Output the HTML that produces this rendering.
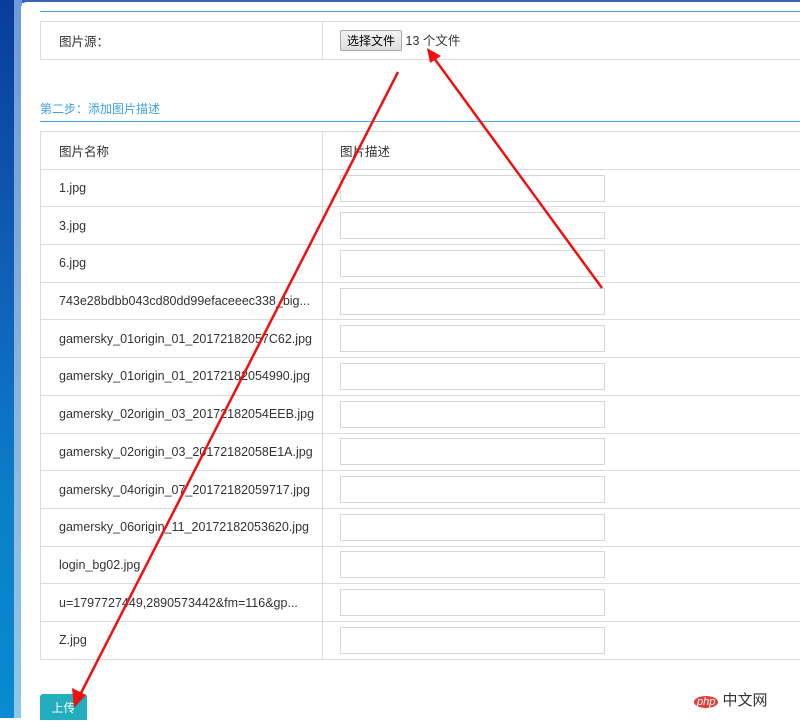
<!DOCTYPE html>
<html><head><meta charset="utf-8"><style>
body{margin:0;width:800px;height:718px;overflow:hidden;position:relative;background:#fff;font-family:"Liberation Sans","Noto Sans CJK SC",sans-serif;font-size:12.5px;color:#333}
.bg{position:absolute;left:0;top:0;width:14px;height:718px;background:linear-gradient(#0a3d9a,#1060b8 40%,#0b7fc8 70%,#0a8ad0)}
.bg2{position:absolute;left:14px;top:0;width:8px;height:718px;background:linear-gradient(#6c9bd8,#8ab6e0 60%,#8cc8e8)}
.topb{position:absolute;left:22px;top:0;width:778px;height:3px;background:#3a64b8}
.panel{position:absolute;left:21px;top:2px;width:779px;height:716px;background:#fff;border-top-left-radius:6px}
.hl{position:absolute;left:40px;right:0;height:1px;background:#4aa8e8}
table{position:absolute;left:40px;width:761px;border-collapse:collapse;table-layout:fixed}
td{border:1px solid #dcdcdc;padding:0 0 0 18px;white-space:nowrap;overflow:hidden;box-sizing:border-box;vertical-align:middle}
td.c2{padding-left:17px}
.t2 tr{height:37.7px}
.inp{width:265px;height:27px;border:1px solid #d6d6d6;box-sizing:border-box}
.btn{display:inline-block;border:1px solid #a9a9a9;background:linear-gradient(#f4f4f4,#dedede);padding:1px 6px;border-radius:2px;font-size:12px;color:#000}
</style></head><body>
<div class="bg"></div><div class="bg2"></div><div class="topb"></div>
<div class="panel"></div>
<div class="hl" style="top:11px"></div>
<table style="top:21px"><col style="width:282px"><col><tr style="height:38px"><td>图片源：</td><td class="c2"><span class="btn">选择文件</span> 13 个文件</td></tr></table>
<div style="position:absolute;left:40px;top:100px;color:#3ea0e4;font-size:12px">第二步：添加图片描述</div>
<div class="hl" style="top:121px"></div>
<table class="t2" style="top:131px"><col style="width:282px"><col>
<tr><td>图片名称</td><td class="c2">图片描述</td></tr>
<tr><td>1.jpg</td><td class="c2"><div class="inp"></div></td></tr>
<tr><td>3.jpg</td><td class="c2"><div class="inp"></div></td></tr>
<tr><td>6.jpg</td><td class="c2"><div class="inp"></div></td></tr>
<tr><td>743e28bdbb043cd80dd99efaceeec338_big...</td><td class="c2"><div class="inp"></div></td></tr>
<tr><td>gamersky_01origin_01_20172182057C62.jpg</td><td class="c2"><div class="inp"></div></td></tr>
<tr><td>gamersky_01origin_01_20172182054990.jpg</td><td class="c2"><div class="inp"></div></td></tr>
<tr><td>gamersky_02origin_03_20172182054EEB.jpg</td><td class="c2"><div class="inp"></div></td></tr>
<tr><td>gamersky_02origin_03_20172182058E1A.jpg</td><td class="c2"><div class="inp"></div></td></tr>
<tr><td>gamersky_04origin_07_20172182059717.jpg</td><td class="c2"><div class="inp"></div></td></tr>
<tr><td>gamersky_06origin_11_20172182053620.jpg</td><td class="c2"><div class="inp"></div></td></tr>
<tr><td>login_bg02.jpg</td><td class="c2"><div class="inp"></div></td></tr>
<tr><td>u=1797727449,2890573442&amp;fm=116&amp;gp...</td><td class="c2"><div class="inp"></div></td></tr>
<tr><td>Z.jpg</td><td class="c2"><div class="inp"></div></td></tr>
</table>
<div style="position:absolute;left:40px;top:694px;width:47px;height:26px;background:#22aebf;border-radius:3px 3px 0 0;color:#fff;font-size:12px;text-align:center;line-height:28px">上传</div>
<div style="position:absolute;left:694px;top:689px;font-size:15px;color:#333"><span style="display:inline-block;background:#e0403a;color:#fff;border-radius:50%;font-size:11px;padding:0 3px;font-style:italic">php</span> 中文网</div>
<svg style="position:absolute;left:0;top:0" width="800" height="718">
<g stroke="#f01010" stroke-width="2.5" fill="#f01010">
<line x1="398" y1="72" x2="80" y2="695"/>
<polygon points="74,708 72,688 86,695" stroke="none"/>
<line x1="602" y1="288" x2="434" y2="58"/>
<polygon points="427,48 441,56 430,63" stroke="none"/>
</g></svg>
</body></html>
